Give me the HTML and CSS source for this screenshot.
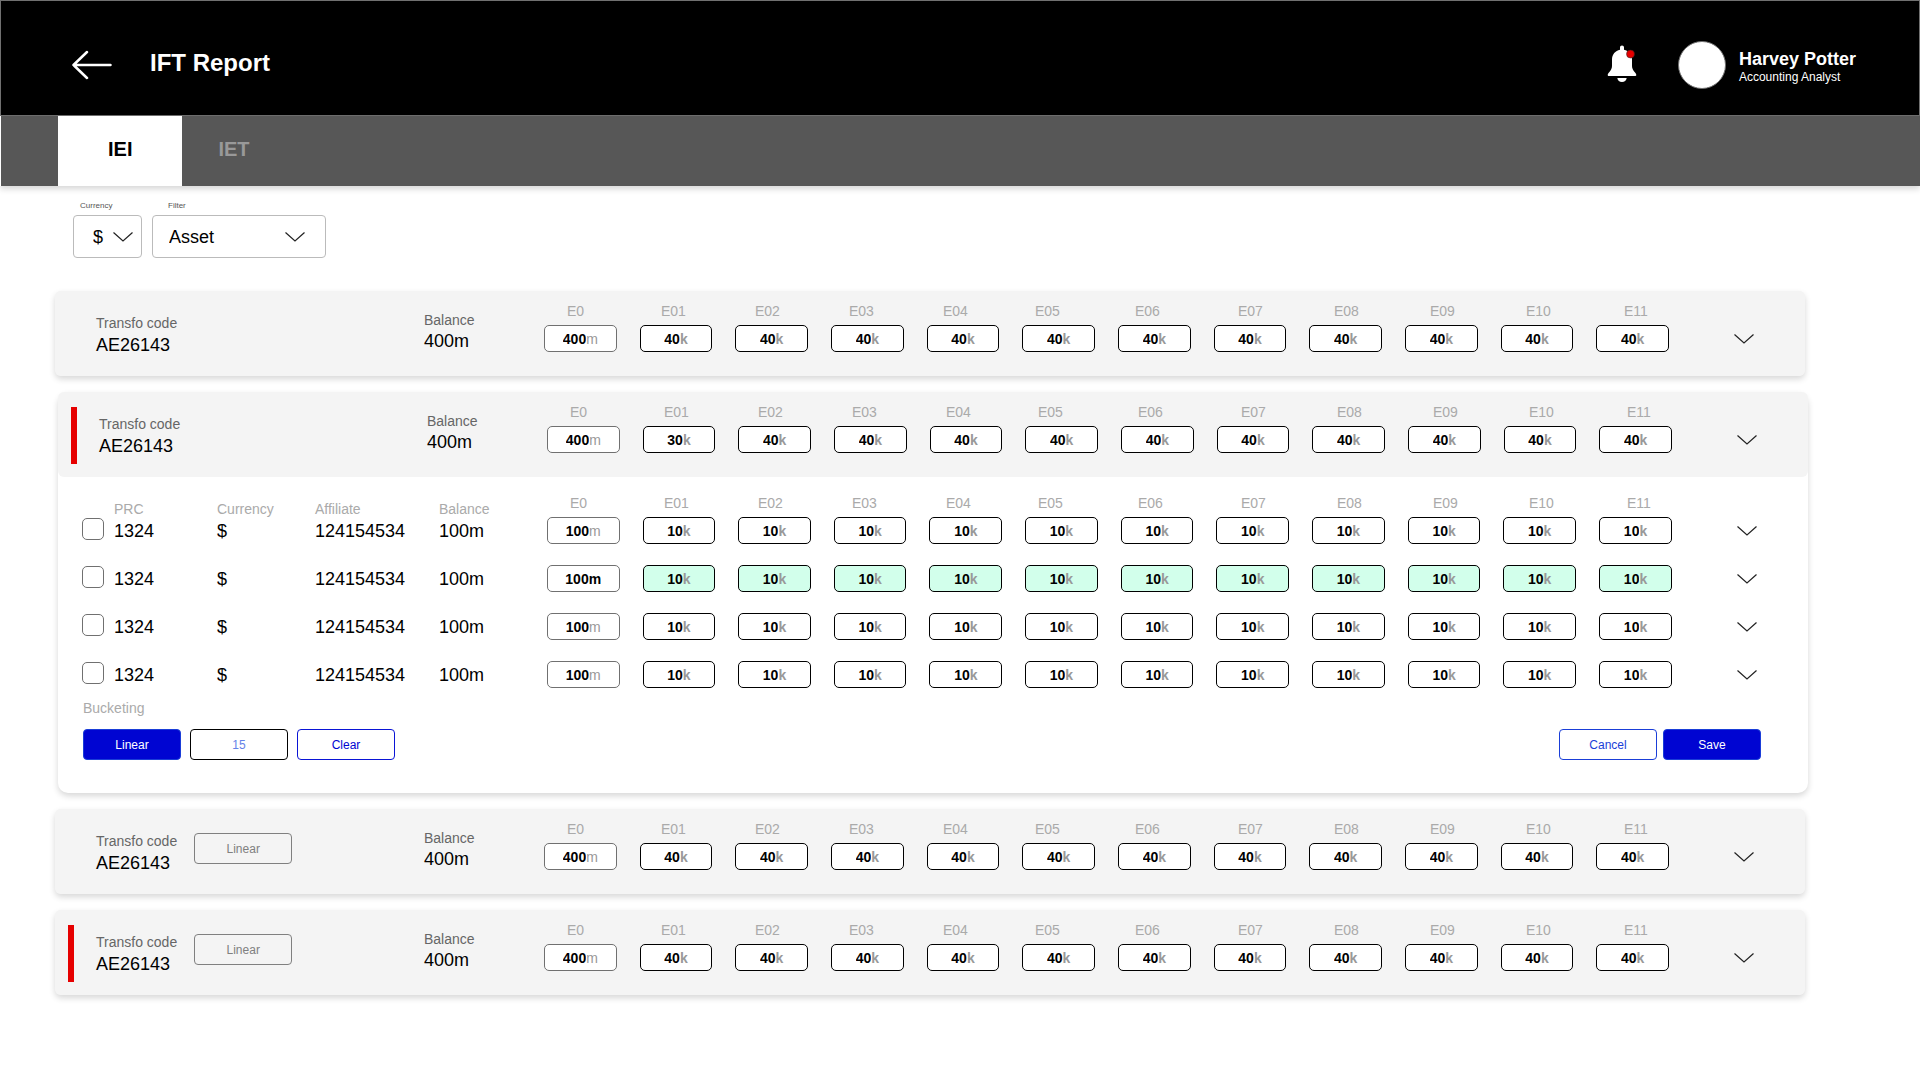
FILE: index.html
```html
<!DOCTYPE html>
<html lang="en">
<head>
<meta charset="utf-8">
<meta name="viewport" content="width=device-width, initial-scale=1">
<title>IFT Report</title>
<link rel="stylesheet" href="styles.css">
</head>
<body>
<header class="topbar">
  <a class="back" href="#" aria-label="Back">
    <svg width="40" height="30" viewBox="0 0 40 30"><path d="M15 2 1.500 15 15 28M1.500 15H38.500" fill="none" stroke="#fff" stroke-width="2.500" stroke-linecap="round" stroke-linejoin="round"/></svg>
  </a>
  <h1 class="title">IFT Report</h1>
  <button class="bell" type="button" aria-label="Notifications">
    <svg width="30" height="38" viewBox="0 0 30 38">
      <path d="M15 .5c1.200 0 2 .9 2 2v2.200c4.700.9 8 4.800 8 9.800v6.500c0 2.500 1.200 4.200 2.600 6 .9 1.100 1.700 1.900 1.700 3s-.8 1-1.800 1h-25c-1 0-1.800 0-1.800-1s.8-1.900 1.700-3c1.400-1.800 2.600-3.500 2.600-6v-6.500c0-5 3.300-8.900 8-9.800V2.500c0-1.100.8-2 2-2z" fill="#fff"/>
      <path d="M10.300 33h9.400c-.4 2.400-2.200 4-4.700 4s-4.300-1.600-4.700-4z" fill="#fff"/>
      <circle cx="23.500" cy="9" r="4" fill="#e60000" stroke="#222" stroke-width=".5"/>
    </svg>
  </button>
  <div class="avatar"></div>
  <div class="user">
    <div class="user-name">Harvey Potter</div>
    <div class="user-role">Accounting Analyst</div>
  </div>
</header>

<nav class="tabs">
  <a class="tab tab-active" href="#iei" aria-current="page">IEI</a>
  <a class="tab" href="#iet">IET</a>
</nav>

<main class="content">
  <form class="filters">
    <div class="field field-currency">
      <label for="currency">Currency</label>
      <div class="select">
        <select id="currency"><option>$</option></select>
        <svg class="chevron" width="20" height="10" viewBox="0 0 20 10"><path d="M.5.500 10 9 19.500.500"/></svg>
      </div>
    </div>
    <div class="field field-filter">
      <label for="filter">Filter</label>
      <div class="select">
        <select id="filter"><option>Asset</option></select>
        <svg class="chevron" width="20" height="10" viewBox="0 0 20 10"><path d="M.5.500 10 9 19.500.500"/></svg>
      </div>
    </div>
  </form>

  <div class="cards" id="cards"></div>
</main>

<script src="app.js"></script>
</body>
</html>
```

FILE: styles.css
```css
* { box-sizing: border-box; }

body {
  margin: 0;
  background: #fff;
  color: #000;
  font-family: "Liberation Sans", Arial, Helvetica, sans-serif;
  font-size: 14px;
  line-height: 16px;
}

button, input, select {
  margin: 0;
  padding: 0;
  border: 0;
  background: none;
  color: inherit;
  font: inherit;
}

svg { display: block; }

.chevron path { fill: none; stroke: #222; stroke-width: 1.2; }

/* Top bar */
.topbar {
  display: flex;
  align-items: center;
  height: 116px;
  padding: 14px 63px 0 71px;
  border: 1px solid #707070;
  background: #000;
  color: #fff;
}
.title {
  flex: 1;
  margin: 0 0 4px 38px;
  font-size: 24px;
  line-height: 28px;
}
.bell { margin: 0 41px 2px 0; }
.avatar {
  width: 48px;
  height: 48px;
  margin-right: 13px;
  border: 1px solid #707070;
  border-radius: 50%;
  background: #fff;
}
.user { margin-bottom: -4px; }
.user-name { font-size: 18px; font-weight: 700; line-height: 20px; }
.user-role { font-size: 12px; }

/* Tabs */
.tabs {
  display: flex;
  height: 70px;
  padding-left: 57px;
  border-left: 1px solid #fff;
  background: #575757;
  box-shadow: 0 3px 6px rgba(0, 0, 0, .16);
}
.tab {
  display: flex;
  align-items: center;
  padding: 0 36px 4px;
  color: #999;
  font-size: 20px;
  font-weight: 700;
  text-decoration: none;
}
.tab-active {
  padding: 0 50px 4px;
  background: #fff;
  color: #000;
}

/* Filters */
.content { padding: 15px 115px 40px 55px; }
.filters { display: flex; gap: 10px; padding-left: 18px; }
.field { display: grid; gap: 4px; }
.field label { color: #555; font-size: 8px; line-height: 10px; }
.field-currency { width: 69px; }
.field-currency label { padding-left: 7px; }
.field-currency select { padding-left: 19px; }
.field-currency .chevron { margin-right: 9px; }
.field-filter { width: 174px; }
.field-filter label { padding-left: 16px; }
.field-filter select { padding-left: 16px; }
.field-filter .chevron { margin-right: 21px; }
.select { display: grid; align-items: center; }
.select > * { grid-area: 1 / 1; }
.select select {
  width: 100%;
  height: 43px;
  border: 1px solid #bbb;
  border-radius: 4px;
  appearance: none;
  font-size: 18px;
}
.select .chevron { justify-self: end; pointer-events: none; }

/* Cards */
.cards { display: grid; gap: 16px; margin-top: 33px; }
.card {
  border-radius: 6px;
  background: #f4f4f4;
  box-shadow: 0 3px 6px rgba(0, 0, 0, .16);
}
.card-open {
  margin: 0 -3px 0 3px;
  border-radius: 10px;
  background: #fff;
}
.card-head {
  display: grid;
  grid-template-columns: 328fr 120fr 1125fr 85fr;
  position: relative;
  min-height: 85px;
  padding: 0 51px 0 41px;
  border-radius: 6px;
  background: #f4f4f4;
}
.flag {
  position: absolute;
  top: 15px;
  bottom: 13px;
  left: 13px;
  width: 6px;
  background: #e60000;
}
.code { display: flex; align-items: flex-start; gap: 17px; padding-top: 24px; }
.balance { padding-top: 21px; }
.caption { color: #666; }
.figure { margin-top: 4px; font-size: 18px; line-height: 20px; white-space: nowrap; }
.balance .figure { margin-top: 3px; }

.series { padding-top: 12px; }
.series-labels {
  display: grid;
  grid-template-columns: repeat(4, 94fr) 92fr 100fr 103fr repeat(3, 96fr) 98fr 45fr;
  margin-bottom: 6px;
  padding-left: 23px;
  color: #aaa;
}
.series-labels > * { min-width: 0; }
.series-boxes {
  display: grid;
  grid-template-columns: repeat(12, minmax(0, 1fr));
  column-gap: 23px;
}
.box {
  display: flex;
  align-items: center;
  justify-content: center;
  height: 27px;
  border: 1px solid #000;
  border-radius: 5px;
  background: #fff;
  color: #999;
  font-weight: 700;
}
.box input { width: 2ch; color: #000; font-weight: 700; }
.box-total { border-color: #707070; font-weight: 400; }
.box-total input { width: 3ch; }
.box-strong { color: #000; font-weight: 700; }
.box-changed { background: #d2ffeb; }

.toggle {
  display: grid;
  place-content: center end;
  height: 27px;
  margin-left: auto;
}
.card-head .toggle { margin-top: 34px; }

/* Detail table */
.detail { padding: 18px 0 33px; }
.detail table, .detail thead, .detail tbody { display: grid; }
.detail tbody { row-gap: 21px; }
.detail tr { display: grid; padding: 0 51px 0 24px; }
.detail th, .detail td { min-width: 0; padding: 0; }
.detail thead tr {
  grid-template-columns: 32fr 103fr 98fr 124fr 131fr repeat(4, 94fr) 92fr 100fr 103fr repeat(3, 96fr) 98fr 45fr 85fr;
  align-items: end;
}
.detail th { color: #aaa; font-weight: 400; text-align: left; }
.detail th.period { padding-bottom: 6px; }
.detail tbody tr {
  grid-template-columns: 96fr 309fr 294fr 372fr 324fr repeat(11, 287fr) 219fr 255fr;
  align-items: center;
}
.detail td { font-size: 18px; line-height: 20px; }
.detail td.pick { padding-bottom: 3px; }
.detail td.entry { padding-right: 23px; font-size: 14px; line-height: 16px; }
.detail td.entry-last { padding-right: 0; }
.detail input[type="checkbox"] {
  display: block;
  width: 22px;
  height: 22px;
  border: 1px solid #707070;
  border-radius: 5px;
  background: #fff;
  appearance: none;
}

.bucketing {
  display: grid;
  grid-template-columns: 1fr auto;
  row-gap: 13px;
  margin-top: 12px;
  padding: 0 47px 0 25px;
}
.bucketing-label { grid-column: 1 / -1; color: #aaa; }
.group { display: flex; gap: 9px; }
.group-end { gap: 6px; }
.btn {
  width: 98px;
  height: 31px;
  border: 1px solid #0a14d6;
  border-radius: 4px;
  background: #fff;
  color: #0005d2;
  font-size: 12px;
  text-align: center;
}
.btn-primary { border-color: #1a3ed8; background: #0005d2; color: #fff; }
.btn-cancel { border-color: #1a3ed8; color: #1a3ed8; }
.btn-count { border-color: #000; color: #6482e8; }
.btn-muted { border-color: #808080; background: transparent; color: #808080; }
```

FILE: app.js
```js
const periods = ['E0', 'E01', 'E02', 'E03', 'E04', 'E05', 'E06', 'E07', 'E08', 'E09', 'E10', 'E11'];

const cards = [
  { values: [400, 40, 40, 40, 40, 40, 40, 40, 40, 40, 40, 40] },
  {
    flagged: true,
    values: [400, 30, 40, 40, 40, 40, 40, 40, 40, 40, 40, 40],
    rows: [{}, { changed: true }, {}, {}]
  },
  { linear: true, values: [400, 40, 40, 40, 40, 40, 40, 40, 40, 40, 40, 40] },
  { linear: true, flagged: true, values: [400, 40, 40, 40, 40, 40, 40, 40, 40, 40, 40, 40] }
];

const detailValues = [100, 10, 10, 10, 10, 10, 10, 10, 10, 10, 10, 10];

const toggle = `<button class="toggle" type="button" aria-label="Toggle details">
  <svg class="chevron" width="20" height="10" viewBox="0 0 20 10"><path d="M.5.500 10 9 19.500.500"/></svg></button>`;

function box(value, i, changed) {
  const classes = ['box'];
  if (i === 0) classes.push('box-total');
  if (changed) classes.push(i === 0 ? 'box-strong' : 'box-changed');
  return `<label class="${classes.join(' ')}"><input type="text" value="${value}" aria-label="${periods[i]}">${i === 0 ? 'm' : 'k'}</label>`;
}

function detailRow(row) {
  const entries = detailValues.map((v, i) =>
    `<td class="entry${i === 11 ? ' entry-last' : ''}">${box(v, i, row.changed)}</td>`).join('');
  return `<tr><td class="pick"><input type="checkbox" aria-label="Select 1324"></td>
    <td>1324</td><td>$</td><td>124154534</td><td>100m</td>${entries}<td>${toggle}</td></tr>`;
}

function detail(rows) {
  return `<div class="detail">
    <table>
      <thead><tr><th></th><th>PRC</th><th>Currency</th><th>Affiliate</th><th>Balance</th>
        ${periods.map(p => `<th class="period">${p}</th>`).join('')}<th></th></tr></thead>
      <tbody>${rows.map(detailRow).join('')}</tbody>
    </table>
    <div class="bucketing">
      <label class="bucketing-label" for="buckets">Bucketing</label>
      <div class="group">
        <button class="btn btn-primary" type="button">Linear</button>
        <input class="btn btn-count" id="buckets" type="text" value="15">
        <button class="btn" type="button">Clear</button>
      </div>
      <div class="group group-end">
        <button class="btn btn-cancel" type="button">Cancel</button>
        <button class="btn btn-primary" type="button">Save</button>
      </div>
    </div>
  </div>`;
}

function card(c) {
  return `<section class="card${c.rows ? ' card-open' : ''}">
    <div class="card-head">
      ${c.flagged ? '<span class="flag"></span>' : ''}
      <div class="code">
        <div><div class="caption">Transfo code</div><div class="figure">AE26143</div></div>
        ${c.linear ? '<button class="btn btn-muted" type="button">Linear</button>' : ''}
      </div>
      <div class="balance"><div class="caption">Balance</div><div class="figure">400m</div></div>
      <div class="series">
        <div class="series-labels">${periods.map(p => `<span>${p}</span>`).join('')}</div>
        <div class="series-boxes">${c.values.map((v, i) => box(v, i)).join('')}</div>
      </div>
      ${toggle}
    </div>
    ${c.rows ? detail(c.rows) : ''}
  </section>`;
}

document.getElementById('cards').innerHTML = cards.map(card).join('');
```
